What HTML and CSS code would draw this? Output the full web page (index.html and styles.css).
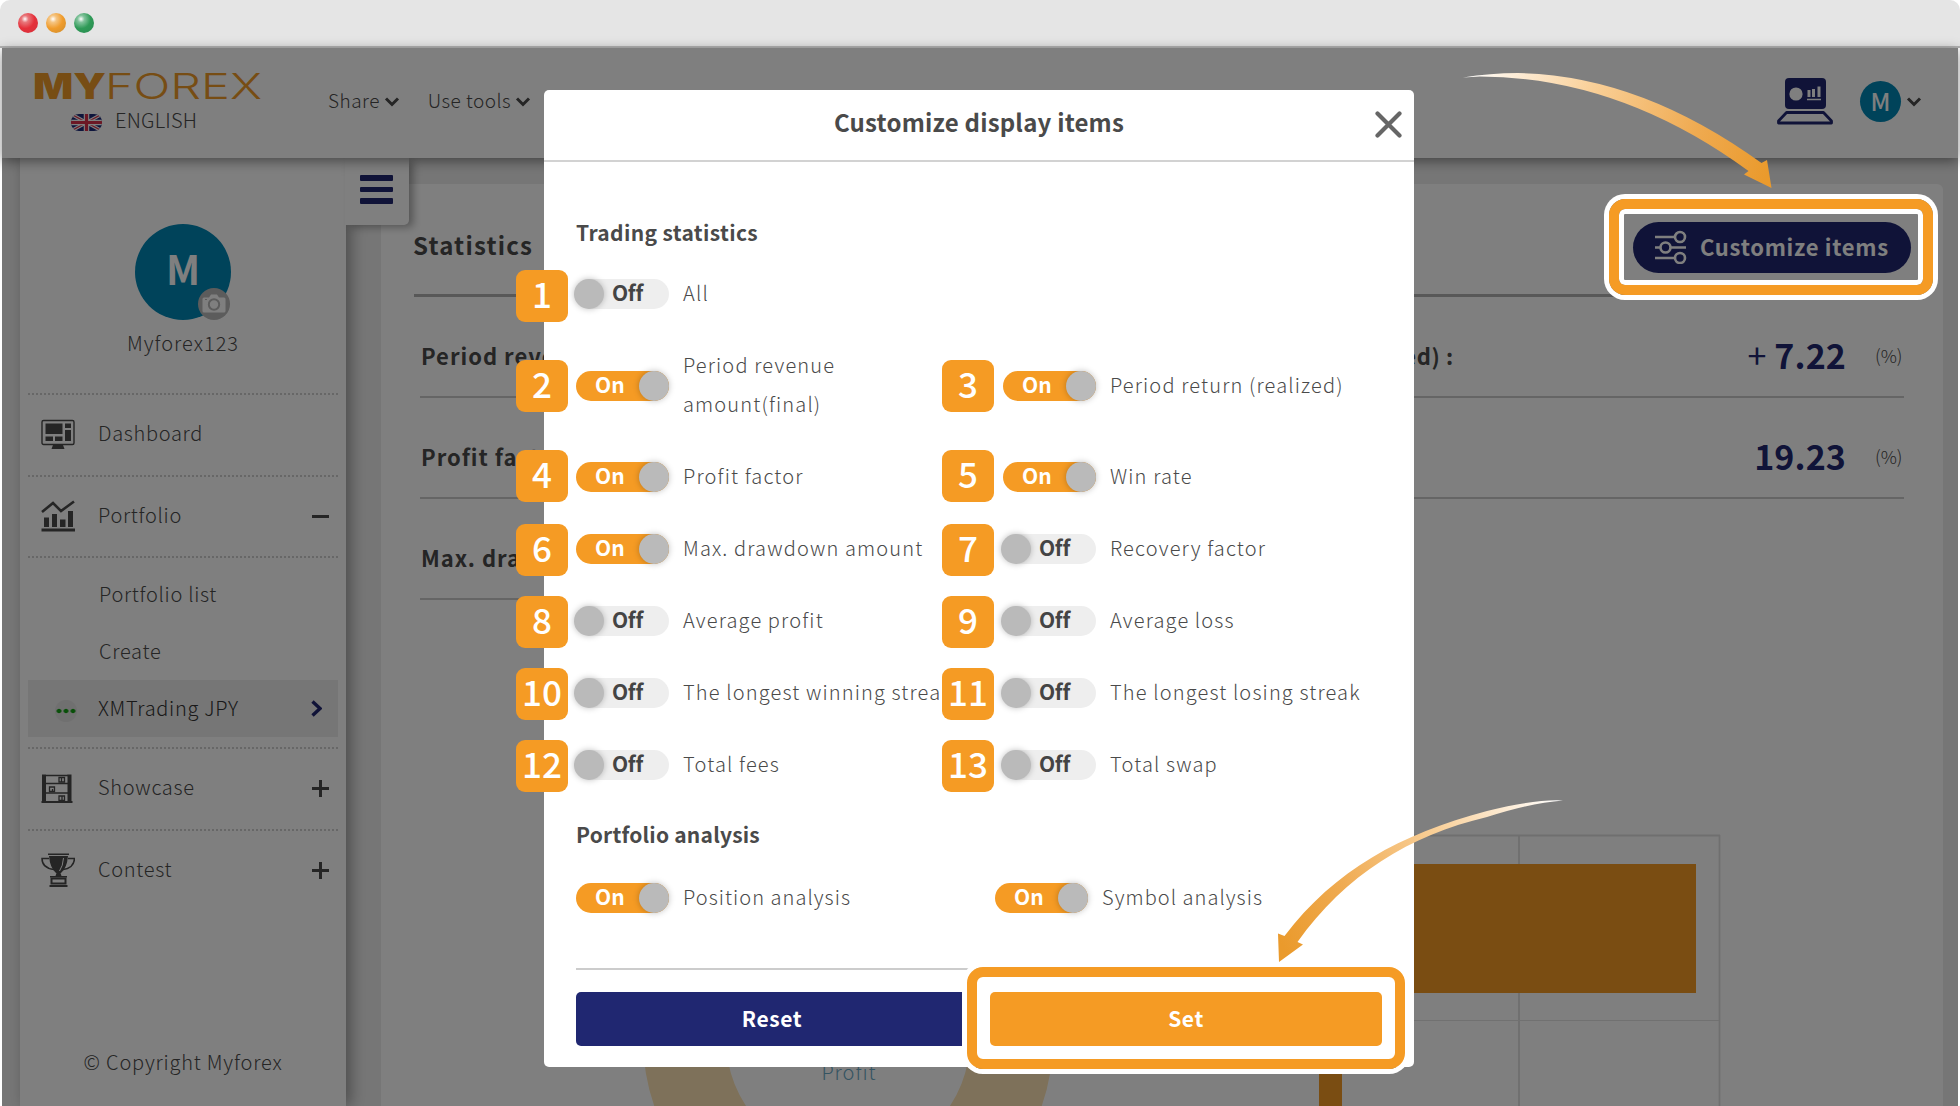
FILE: index.html
```html
<!DOCTYPE html>
<html lang="en">
<head>
    <meta charset="UTF-8">
    <meta name="viewport" content="width=device-width, initial-scale=1.0">
    <title>Myforex - Statistics</title>
    <link rel="stylesheet" href="styles.css">
</head>
<body>
    <div class="window-bar">
        <span class="dot red"></span>
        <span class="dot yellow"></span>
        <span class="dot green"></span>
    </div>

    <div class="window">
        <header class="header">
            <div class="brand">
                <svg class="logo" width="232" height="36" viewBox="0 0 232 36">
                    <text x="1" y="31" font-weight="900" textLength="73" lengthAdjust="spacingAndGlyphs">MY</text>
                    <text x="73" y="31" font-weight="300" textLength="157" lengthAdjust="spacingAndGlyphs">FOREX</text>
                </svg>
                <div class="language">
                    <svg width="31" height="17" viewBox="0 0 31 17">
                        <defs><clipPath id="flag"><rect width="31" height="17" rx="8"/></clipPath></defs>
                        <g clip-path="url(#flag)">
                            <rect width="31" height="17" fill="#1c2a78"/>
                            <path d="M0 0 31 17M31 0 0 17" stroke="#fff" stroke-width="3.400"/>
                            <path d="M0 0 31 17M31 0 0 17" stroke="#d8314a" stroke-width="1.200"/>
                            <path d="M15.500 0V17M0 8.500H31" stroke="#fff" stroke-width="5.500"/>
                            <path d="M15.500 0V17M0 8.500H31" stroke="#d8314a" stroke-width="3.200"/>
                        </g>
                    </svg>
                    <span>ENGLISH</span>
                </div>
            </div>
            <nav class="nav">
                <a>Share <svg width="14" height="9" viewBox="0 0 14 9"><path d="M1 1.500 7 7.500 13 1.500"/></svg></a>
                <a>Use tools <svg width="14" height="9" viewBox="0 0 14 9"><path d="M1 1.500 7 7.500 13 1.500"/></svg></a>
            </nav>
            <div class="account">
                <svg width="56" height="47" viewBox="0 0 56 47">
                    <rect x="8" y="0" width="41" height="31" rx="4" fill="#202771"/>
                    <circle cx="19" cy="16" r="6.600" fill="#fff"/>
                    <path d="M30 21.500H44" stroke="#fff" stroke-width="1.500"/>
                    <path d="M32 12V19M36.500 11V19" stroke="#fff" stroke-width="3"/>
                    <path d="M42 8.500V19" stroke="#fff" stroke-width="3"/>
                    <path d="M9.500 34.500H46.500L54.500 43V45H1.500V43Z" fill="none" stroke="#202771" stroke-width="2.800" stroke-linejoin="round"/>
                </svg>
                <span class="account-avatar">M</span>
                <svg class="chevron" width="14" height="9" viewBox="0 0 14 9"><path d="M1 1.500 7 7.500 13 1.500"/></svg>
            </div>
        </header>

        <div class="content">
            <aside class="sidebar">
                <div class="menu-tab"><i></i><i></i><i></i></div>
                <div class="profile">
                    <div class="avatar">M
                        <span class="camera">
                            <svg width="24" height="20" viewBox="0 0 24 20">
                                <path d="M2 3.500H7L9 0.500H15L17 3.500H22Q23.500 3.500 23.500 5V17Q23.500 18.500 22 18.500H2Q.5 18.500 .5 17V5Q.5 3.500 2 3.500Z" fill="#fff"/>
                                <circle cx="12" cy="10.500" r="5.200" fill="none" stroke="#b8b8b8" stroke-width="2"/>
                                <path d="M3 5.500H5" stroke="#b8b8b8"/>
                            </svg>
                        </span>
                    </div>
                    <div class="username">Myforex123</div>
                </div>
                <ul class="menu">
                    <li class="item">
                        <svg width="34" height="34" viewBox="0 0 34 34">
                            <rect x="1" y="2.500" width="32" height="24" rx="1.500" fill="none" stroke="#4a4a4a" stroke-width="1.400"/>
                            <path d="M4.500 5.500H21.500V16H4.500ZM24 5.500H30V10H24ZM24 12H30V23H24ZM4.500 18.500H12V23H4.500ZM14 18.500H21.500V23H14ZM12 27H22L23.500 31H10.500Z"/>
                        </svg>
                        <span>Dashboard</span>
                    </li>
                    <li class="item">
                        <svg width="34" height="34" viewBox="0 0 34 34">
                            <path d="M1 13 12 4 20 12 33 2.500" fill="none" stroke="#4a4a4a" stroke-width="2.600"/>
                            <path d="M3 18.500H8V28H3ZM11 15H16V28H11ZM19 20.500H24.500V28H19ZM27 12H32V28H27ZM.5 29.500H34V32.500H.5Z"/>
                        </svg>
                        <span>Portfolio</span>
                        <b class="sign minus"></b>
                    </li>
                    <li class="submenu">
                        <a>Portfolio list</a>
                        <a>Create</a>
                        <a class="selected"><i class="broker"></i><span>XMTrading JPY</span>
                            <svg width="11" height="17" viewBox="0 0 11 17"><path d="M1.500 1.500 9 8.500 1.500 15.500"/></svg>
                        </a>
                    </li>
                    <li class="item">
                        <svg width="34" height="34" viewBox="0 0 34 34">
                            <path d="M1 2.500H5V30H1ZM26.500 2.500H30.500V30H26.500ZM.5 29H31.500V31H.5Z"/>
                            <path d="M5 3.500H27M5 11.500H27M5 21H27" stroke="#4a4a4a" stroke-width="1.600"/>
                            <path d="M18 5.500H23.500V10H18ZM8.500 15H13.500V19.500H8.500ZM18 24H23.500V28.500H18ZM20.500 6V10M11.500 17V19M21 24V28" fill="none" stroke="#4a4a4a" stroke-width="1.300"/>
                        </svg>
                        <span>Showcase</span>
                        <b class="sign"></b>
                    </li>
                    <li class="item">
                        <svg width="34" height="34" viewBox="0 0 34 34">
                            <path d="M7 .5H28V2H7ZM8 3H27Q26 15 20 20H15Q9 15 8 3ZM15.500 20H19.500L20.500 23H14.500ZM9 23H26V24.500H9ZM8.500 32H26.500V34H8.500Z"/>
                            <path d="M8 5.500H1Q1 15 13 16.500M27 5.500H33.500Q33 15 22 16.500" fill="none" stroke="#4a4a4a" stroke-width="1.500"/>
                            <path d="M22.500 5Q22 13 18.500 18" fill="none" stroke="#fff" stroke-width="1"/>
                            <path d="M10.500 25.500H24.500V30.500H10.500Z" fill="none" stroke="#4a4a4a" stroke-width="2"/>
                        </svg>
                        <span>Contest</span>
                        <b class="sign"></b>
                    </li>
                </ul>
                <div class="copyright">© Copyright Myforex</div>
            </aside>

            <main class="panel">
                <div class="panel-head">
                    <h2>Statistics</h2>
                    <button class="customize">
                        <svg width="32" height="34" viewBox="0 0 32 34" fill="none" stroke="#fff" stroke-width="2.600">
                            <path d="M0 7H19M0 17.500H5M16 17.500H31M0 28H19"/>
                            <circle cx="25" cy="7" r="5"/>
                            <circle cx="10.500" cy="17.500" r="5"/>
                            <circle cx="25" cy="28" r="5"/>
                        </svg>
                        <span>Customize items</span>
                    </button>
                </div>
                <div class="stats">
                    <div class="stat">Period revenue :</div>
                    <div class="stat"><span class="tight">Period return (realized) :</span> <strong><em>+</em>7.22</strong><small>(%)</small></div>
                    <div class="stat">Profit factor :</div>
                    <div class="stat">Win rate : <strong>19.23</strong><small>(%)</small></div>
                    <div class="stat">Max. drawdown :</div>
                </div>
                <div class="charts">
                    <svg width="1485" height="306" viewBox="420 800 1485 306">
                        <circle cx="848" cy="1039" r="163.500" fill="none" stroke="#fce3b4" stroke-width="83"/>
                        <text x="849" y="1080" text-anchor="middle" class="chart-text">Profit</text>
                        <path d="M1319 835.500H1720M1519 835V1106M1719.500 835V1106" fill="none" stroke="#dedede" stroke-width="1.800"/>
                        <path d="M1319 1020.500H1719" stroke="#e2e2e2"/>
                        <path d="M1319 864H1696V993H1319ZM1319 1050H1342V1106H1319Z" fill="#f59b24"/>
                    </svg>
                </div>
            </main>
        </div>
    </div>

    <div class="overlay">
        <div class="modal">
            <div class="modal-head">
                <h3>Customize display items</h3>
                <svg class="close" width="27" height="27" viewBox="0 0 27 27"><path d="M2.500 2.500 24.500 24.500M24.500 2.500 2.500 24.500"/></svg>
            </div>
            <div class="modal-body">
                <h4>Trading statistics</h4>
                <div class="options">
                    <div class="option"><b class="num n1">1</b><span class="toggle">Off</span><label>All</label></div>
                    <div class="option"></div>
                    <div class="option"><b class="num n2">2</b><span class="toggle on">On</span><label>Period revenue<br>amount(final)</label></div>
                    <div class="option"><b class="num n2">3</b><span class="toggle on">On</span><label>Period return (realized)</label></div>
                    <div class="option"><b class="num n4">4</b><span class="toggle on">On</span><label>Profit factor</label></div>
                    <div class="option"><b class="num n4">5</b><span class="toggle on">On</span><label>Win rate</label></div>
                    <div class="option"><b class="num">6</b><span class="toggle on">On</span><label>Max. drawdown amount</label></div>
                    <div class="option"><b class="num">7</b><span class="toggle">Off</span><label>Recovery factor</label></div>
                    <div class="option"><b class="num">8</b><span class="toggle">Off</span><label>Average profit</label></div>
                    <div class="option"><b class="num">9</b><span class="toggle">Off</span><label>Average loss</label></div>
                    <div class="option"><b class="num">10</b><span class="toggle">Off</span><label>The longest winning streak</label></div>
                    <div class="option"><b class="num">11</b><span class="toggle">Off</span><label>The longest losing streak</label></div>
                    <div class="option"><b class="num">12</b><span class="toggle">Off</span><label>Total fees</label></div>
                    <div class="option"><b class="num">13</b><span class="toggle">Off</span><label>Total swap</label></div>
                </div>
                <h4 class="second">Portfolio analysis</h4>
                <div class="options analysis">
                    <div class="option"><span class="toggle on">On</span><label>Position analysis</label></div>
                    <div class="option"><span class="toggle on">On</span><label>Symbol analysis</label></div>
                </div>
                <div class="actions">
                    <button class="reset">Reset</button>
                    <button class="set">Set<span class="ring ring-set"></span></button>
                </div>
            </div>
        </div>
        <div class="ring ring-customize"></div>
        <svg class="arrows" width="1960" height="1106" viewBox="0 0 1960 1106">
            <defs>
                <linearGradient id="fade1" gradientUnits="userSpaceOnUse" x1="1463" y1="77" x2="1765" y2="180">
                    <stop offset="0" stop-color="#fff"/>
                    <stop offset=".4" stop-color="#f9cf97"/>
                    <stop offset=".75" stop-color="#efaa50"/>
                    <stop offset="1" stop-color="#ea9a2c"/>
                </linearGradient>
                <linearGradient id="fade2" gradientUnits="userSpaceOnUse" x1="1560" y1="800" x2="1285" y2="950">
                    <stop offset="0" stop-color="#fff"/>
                    <stop offset=".4" stop-color="#f9cf97"/>
                    <stop offset=".75" stop-color="#efaa50"/>
                    <stop offset="1" stop-color="#ea9a2c"/>
                </linearGradient>
            </defs>
            <path fill="url(#fade1)" d="M1463 77.500Q1490 73 1518 73Q1640 75 1761.500 163L1767 160 1771.500 188 1744 174.500 1748.500 171Q1620 77 1480 76.500Z"/>
            <path fill="url(#fade2)" d="M1563 800.500Q1535 799 1487 811C1400 834 1335 870 1284.500 936L1278 933.500 1279 962 1303 944.500 1297.500 942C1345 875 1410 835 1487 817Q1530 803 1563 800.500Z"/>
        </svg>
    </div>
</body>
</html>
```
FILE: styles.css
```css
* {
    box-sizing: border-box;
}
body {
    margin: 0;
    height: 1106px;
    overflow: hidden;
    background-color: #fff;
    color: #4a4a4a;
    font-family: "Noto Sans CJK JP", "Noto Sans", sans-serif;
    font-size: 20px;
    font-weight: 300;
    letter-spacing: 1px;
}
h2, h3, h4, ul {
    margin: 0;
    padding: 0;
}

/* Window frame */
.window-bar {
    display: flex;
    align-items: center;
    gap: 8px;
    height: 48px;
    padding-left: 18px;
    background-color: #e5e5e5;
    border-bottom: 2px solid #b4b4b4;
    border-radius: 10px 10px 0 0;
}
.dot {
    width: 20px;
    height: 20px;
    border-radius: 50%;
}
.red { background: radial-gradient(circle at 35% 30%, #fff 0, #e8787c 18%, #e5303a 50%, #d2343f 100%); }
.yellow { background: radial-gradient(circle at 35% 30%, #fff 0, #f5c583 18%, #f09c2c 50%, #c98b2e 100%); }
.green { background: radial-gradient(circle at 35% 30%, #fff 0, #82c39c 18%, #2f9a57 50%, #2a8a50 100%); }
.window {
    display: flex;
    flex-direction: column;
    height: 1058px;
    margin: 0 2px;
    background-color: #ededed;
}

/* Header */
.header {
    display: flex;
    flex-shrink: 0;
    align-items: center;
    height: 110px;
    padding: 0 37px 0 30px;
    background-color: #fff;
    box-shadow: 0 3px 12px rgba(0, 0, 0, .45);
    z-index: 3;
}
.brand {
    width: 296px;
    margin-bottom: 2px;
}
.logo {
    display: block;
    margin-bottom: 4px;
    fill: #ee9a28;
    font-family: Inter, sans-serif;
    font-size: 36px;
    letter-spacing: 0;
}
.language {
    display: flex;
    align-items: center;
    gap: 13px;
    height: 28px;
    padding-left: 39px;
    letter-spacing: .2px;
}
.language span {
    margin-top: -5px;
}
.nav {
    display: flex;
    gap: 29px;
    margin-bottom: 7px;
    font-size: 19px;
    letter-spacing: .5px;
}
.nav svg, .chevron {
    fill: none;
    stroke: #4a4a4a;
    stroke-width: 3;
    overflow: visible;
}
.nav svg {
    vertical-align: 2px;
}
.account {
    display: flex;
    align-items: center;
    margin: 0 0 4px auto;
}
.account-avatar {
    width: 41px;
    height: 41px;
    margin: 0 6px 0 27px;
    border-radius: 50%;
    background-color: #0086b4;
    color: #fff;
    font-size: 24px;
    font-weight: 500;
    line-height: 39px;
    text-align: center;
    letter-spacing: 0;
}

/* Sidebar */
.content {
    display: flex;
    flex: 1;
    min-height: 0;
    padding-left: 18px;
}
.sidebar {
    position: relative;
    display: flex;
    flex-direction: column;
    width: 326px;
    padding: 0 8px;
    background-color: #fff;
    box-shadow: 5px 0 14px rgba(0, 0, 0, .35);
    z-index: 2;
}
.menu-tab {
    position: absolute;
    top: 0;
    right: -63px;
    display: flex;
    flex-direction: column;
    gap: 6px;
    width: 64px;
    height: 67px;
    padding: 17px 0 0 15px;
    border-radius: 0 0 5px 0;
    background-color: #fff;
    box-shadow: 5px 3px 8px -1px rgba(0, 0, 0, .35);
}
.menu-tab i {
    width: 33px;
    height: 5.5px;
    border-radius: 1px;
    background-color: #202771;
}
.profile {
    height: 235px;
    padding-top: 66px;
    text-align: center;
}
.avatar {
    position: relative;
    width: 96px;
    height: 96px;
    margin: 0 auto;
    border-radius: 50%;
    background-color: #0086b4;
    color: #fff;
    font-size: 40px;
    font-weight: 700;
    line-height: 88px;
    letter-spacing: 0;
}
.camera {
    position: absolute;
    right: 1px;
    bottom: 0;
    display: flex;
    align-items: center;
    justify-content: center;
    width: 32px;
    height: 32px;
    border-radius: 50%;
    background-color: #b8b8b8;
}
.username {
    margin-top: 8px;
    line-height: 30px;
}
.menu {
    list-style: none;
    letter-spacing: .7px;
}
.item {
    display: flex;
    align-items: center;
    gap: 23px;
    height: 81.5px;
    padding: 0 9px 0 13px;
    border-top: 2px dotted #cfcfcf;
}
.item > svg {
    fill: #4a4a4a;
}
.item span {
    margin-top: -4px;
}
.sign {
    width: 17px;
    height: 17px;
    margin-left: auto;
    background: linear-gradient(#4a4a4a, #4a4a4a) center / 17px 3px no-repeat,
                linear-gradient(#4a4a4a, #4a4a4a) center / 3px 17px no-repeat;
}
.minus {
    background: linear-gradient(#4a4a4a, #4a4a4a) center / 17px 3px no-repeat;
}
.submenu {
    padding-top: 8px;
    height: 191px;
    border-top: 2px dotted #cfcfcf;
}
.submenu a {
    display: flex;
    align-items: center;
    height: 57px;
    padding: 0 0 3px 71px;
}
.submenu .selected {
    padding: 0 16px 0 27px;
    background-color: #ececec;
    color: #333;
}
.selected span {
    margin-top: -3px;
}
.selected svg {
    margin-left: auto;
    fill: none;
    stroke: #202771;
    stroke-width: 3.4;
}
.broker {
    width: 22px;
    height: 22px;
    margin: 4px 21px 0 0;
    border-radius: 50%;
    background: radial-gradient(circle, #12a012 2px, transparent 2.6px) center / 7px 22px, #e0e0e0;
}
.copyright {
    margin-top: 132px;
    line-height: 40px;
    text-align: center;
    letter-spacing: .8px;
}

/* Main panel */
.panel {
    flex: 1;
    margin: 26px 15px 0 35px;
    padding: 0 38px 0 33px;
    border-radius: 6px 6px 0 0;
    background-color: #fff;
    overflow: hidden;
}
.panel-head {
    display: flex;
    align-items: center;
    justify-content: space-between;
    height: 113px;
    padding: 14px 0 0;
    border-bottom: 3px solid #b0b0b0;
}
.panel-head h2 {
    margin: -4px 0 0 -1px;
    font-size: 24px;
    font-weight: 700;
    letter-spacing: 1.2px;
}
.customize {
    display: flex;
    align-items: center;
    gap: 14px;
    width: 278px;
    height: 51px;
    margin: 2px -6px 0 0;
    padding: 0 0 0 22px;
    border: none;
    border-radius: 26px;
    background-color: #202771;
    color: #fff;
    font: 700 22px "Noto Sans CJK JP", sans-serif;
    letter-spacing: .7px;
    white-space: nowrap;
}
.customize span {
    margin: -3px 0 0 -1px;
}
.stats {
    display: grid;
    grid-template-columns: 732px 732px;
    column-gap: 20px;
    padding-left: 6px;
}
.stat {
    display: flex;
    align-items: center;
    height: 101px;
    padding: 17px 0 0 1px;
    border-bottom: 2px solid #cacaca;
    font-size: 22px;
    font-weight: 700;
    white-space: nowrap;
}
.stat .tight {
    letter-spacing: .6px;
}
.stat strong {
    margin: -2px 0 0 auto;
    color: #202771;
    font-size: 34px;
    font-weight: 700;
    letter-spacing: .1px;
}
.stat em {
    margin-right: 8px;
    font-style: normal;
    font-weight: 400;
}
.stat small {
    width: 58px;
    padding: 0 0 0 29px;
    font-size: 18px;
    font-weight: 300;
    letter-spacing: 0;
}
.charts {
    margin: 200px 0 0 6px;
}
.chart-text {
    fill: #69a8c4;
}

/* Customize modal */
.overlay {
    position: absolute;
    top: 48px;
    left: 2px;
    width: 1956px;
    height: 1058px;
    padding: 42px 0 0 542px;
    background-color: rgba(0, 0, 0, .5);
    z-index: 10;
}
.modal {
    width: 870px;
    height: 977px;
    border-radius: 5px;
    background-color: #fff;
}
.modal-head {
    position: relative;
    display: flex;
    justify-content: center;
    height: 72px;
    border-bottom: 2px solid #d2d2d2;
}
.modal-head h3 {
    font-size: 24px;
    font-weight: 700;
    line-height: 64px;
    letter-spacing: .2px;
}
.close {
    position: absolute;
    top: 21px;
    right: 12px;
    fill: none;
    stroke: #666;
    stroke-width: 4.2;
    stroke-linecap: round;
}
.modal-body {
    padding: 56px 32px 0;
}
h4 {
    padding-bottom: 2px;
    font-size: 21px;
    font-weight: 700;
    line-height: 28px;
    letter-spacing: .35px;
}
.second {
    margin-top: 19px;
    letter-spacing: .2px;
}
.options {
    display: grid;
    grid-template-columns: 427px 379px;
    grid-template-rows: 72px 111px;
    grid-auto-rows: 72px;
    margin-top: 10px;
}
.analysis {
    grid-template-columns: 419px 387px;
    grid-template-rows: 72px;
    margin-top: 12px;
}
.option {
    position: relative;
    display: flex;
    align-items: center;
}
.option label {
    margin: -3px 0 0 14px;
    line-height: 39px;
    white-space: nowrap;
    letter-spacing: 1.15px;
}
.analysis label {
    margin-top: -4px;
    letter-spacing: 1.05px;
}
.num {
    position: absolute;
    top: 11px;
    left: -60px;
    width: 52px;
    height: 52px;
    border-radius: 9px;
    background-color: #f59b24;
    color: #fff;
    font-size: 35px;
    font-weight: 500;
    line-height: 45px;
    text-align: center;
    letter-spacing: 0;
    z-index: 1;
}
.option:nth-child(even) .num { left: -61px; }
.n1 { top: 12px; }
.n2 { top: 30px; }
.n4 { top: 9px; }
.toggle {
    position: relative;
    width: 93px;
    height: 30px;
    padding-left: 36px;
    border-radius: 15px;
    background-color: #eee;
    color: #444;
    font-size: 21px;
    font-weight: 700;
    line-height: 27px;
    letter-spacing: -.3px;
}
.toggle::after {
    content: "";
    position: absolute;
    top: 0;
    left: -2px;
    width: 30px;
    height: 30px;
    border-radius: 50%;
    background-color: #bababa;
    box-shadow: 0 0 6px rgba(0, 0, 0, .25);
}
.toggle.on {
    padding-left: 19px;
    background-color: #f59b24;
    color: #fff;
    letter-spacing: .2px;
}
.toggle.on::after {
    left: 63px;
}
.actions {
    display: flex;
    gap: 22px;
    margin-top: 34px;
    padding-top: 22px;
    border-top: 2px solid #ccc;
}
.actions button {
    position: relative;
    flex: 1;
    height: 54px;
    padding: 0 0 3px;
    border: none;
    border-radius: 5px;
    background-color: #202771;
    color: #fff;
    font: 700 21px "Noto Sans CJK JP", sans-serif;
    letter-spacing: .6px;
}
.actions .set {
    background-color: #f59b24;
}

/* Highlight rings and arrows */
.ring {
    position: absolute;
    border: 10px solid #f59b24;
    border-radius: 16px;
    box-shadow: 0 0 0 5px #fff, inset 0 0 0 5px #fff;
}
.ring-set {
    top: -25px;
    left: -23px;
    width: 438px;
    height: 102px;
}
.ring-customize {
    top: 151px;
    left: 1607px;
    width: 324px;
    height: 96px;
}
.arrows {
    position: absolute;
    top: -48px;
    left: -2px;
}
```
